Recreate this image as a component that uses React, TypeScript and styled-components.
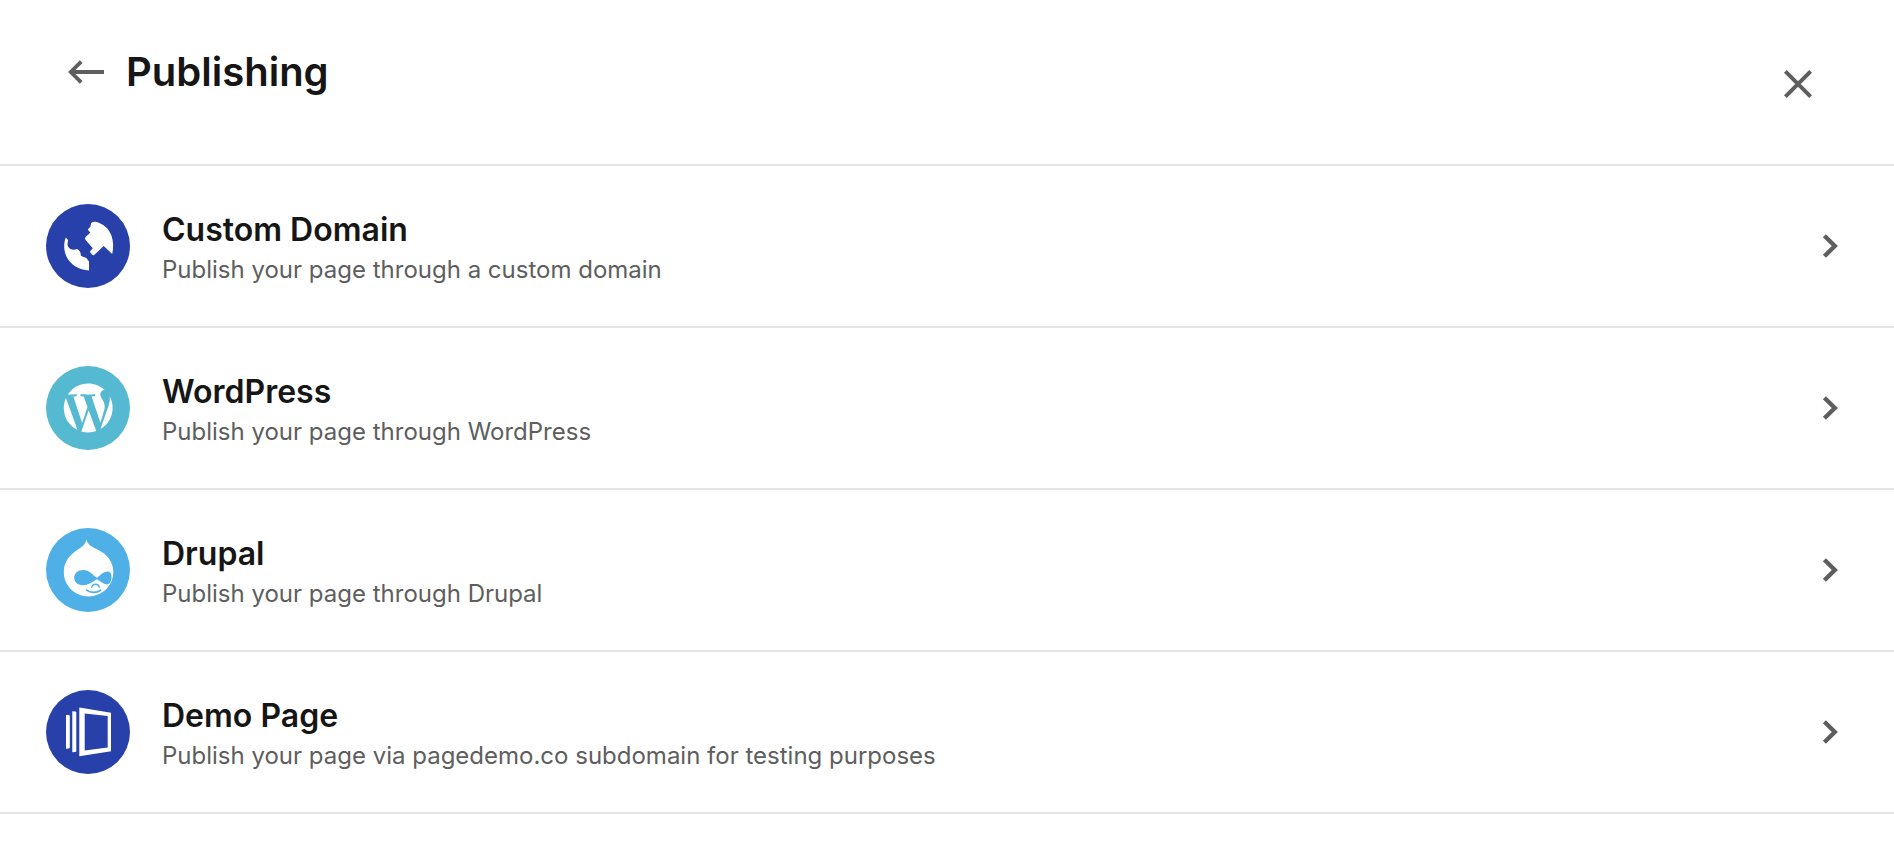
import React from "react";
import styled, { createGlobalStyle } from "styled-components";

const GlobalStyle = createGlobalStyle`
  *, *::before, *::after { box-sizing: border-box; }
  body {
    margin: 0;
    background: #fff;
    color: #161616;
    font-family: Inter, "Liberation Sans", sans-serif;
  }
`;

const Header = styled.header`
  display: flex;
  align-items: flex-start;
  justify-content: space-between;
  padding: 48px 80px 64px 68px;
  border-bottom: 2px solid #e4e4e4;
`;

const TitleGroup = styled.div`
  display: flex;
  align-items: center;
  gap: 22px;
`;

const Title = styled.h1`
  margin: 0;
  font-size: 40px;
  font-weight: 600;
  line-height: 48px;
`;

const IconButton = styled.button<{ $drop?: number }>`
  display: flex;
  margin: ${({ $drop = 0 }) => $drop}px 0 0;
  padding: 0;
  border: 0;
  background: none;
  color: #5e5e5e;
  cursor: pointer;
`;

const List = styled.ul`
  margin: 0;
  padding: 0;
  list-style: none;
`;

const Item = styled.li`
  border-bottom: 2px solid #e4e4e4;
`;

const Option = styled.a`
  display: flex;
  align-items: center;
  gap: 32px;
  padding: 38px 52px 38px 46px;
  color: inherit;
  text-decoration: none;
`;

const Badge = styled.span<{ $color: string }>`
  display: block;
  flex: none;
  width: 84px;
  height: 84px;
  border-radius: 50%;
  background: ${({ $color }) => $color};

  svg {
    display: block;
  }
`;

const Copy = styled.span`
  display: flex;
  flex: 1;
  flex-direction: column;
  gap: 4px;
  padding-top: 4px;
`;

const Name = styled.span`
  font-size: 32px;
  font-weight: 600;
  line-height: 40px;
`;

const Description = styled.span`
  color: #5e5e5e;
  font-size: 24px;
  line-height: 32px;
`;

const Chevron = styled.svg`
  flex: none;
  color: #5e5e5e;
`;

const Glyph = ({ children }: { children: React.ReactNode }) => (
  <svg width="84" height="84" viewBox="0 0 84 84" fill="#fff" aria-hidden="true">
    {children}
  </svg>
);

const GlobeGlyph = () => (
  <Glyph>
    <path d="M45.2 19 Q47 17.6 49.5 17.8 C57 19.5 63 24.5 65.6 32 C67.5 38 67.6 44 66.2 50 L57.7 42 L48.2 51 Q47.3 51.7 46.4 50.8 L44.3 48.6 Q43.7 47.8 44.4 47 L46.8 44.2 L39.6 36 Q38.4 34.4 39.6 33 L44.4 28.6 L42.4 26.6 Q41.4 25.4 42.6 24.4 L44.4 22.8 Z" />
    <path d="M19.8 33.6 L22.2 36.2 Q21 39.5 22 42.5 C24 46 28 46.4 31 45 C33.5 46 35 48.5 34.8 51.5 C36.8 53.3 39 52.9 40.2 54 C41.5 55.5 42.6 57 43 57.5 V66.4 C33 66.2 24 60.6 20.2 52 C17.6 46 17.6 39.5 19.8 33.6 Z" />
  </Glyph>
);

const WordPressGlyph = () => (
  <Glyph>
    <path
      transform="translate(17.8 17.6) scale(.1095) translate(-33 -33)"
      d="M33 256c0-32.3 6.9-63 19.3-90.7l106.4 291.4C84.3 420.5 33 344.2 33 256zm223 223c-21.9 0-43-3.2-63-9.1l66.9-194.4 68.5 187.8c.5 1.1 1 2.1 1.6 3.1-23.1 8.1-48 12.6-74 12.6zm30.7-327.5c13.4-.7 25.5-2.1 25.5-2.1 12-1.4 10.6-19.1-1.4-18.4 0 0-36.1 2.8-59.4 2.8-21.9 0-58.7-2.8-58.7-2.8-12-.7-13.4 17.7-1.4 18.4 0 0 11.4 1.4 23.4 2.1l34.7 95.2L200.6 393l-81.2-241.5c13.4-.7 25.5-2.1 25.5-2.1 12-1.4 10.6-19.1-1.4-18.4 0 0-36.1 2.8-59.4 2.8-4.2 0-9.1-.1-14.4-.3C109.6 73 178.1 33 256 33c58 0 110.9 22.2 150.6 58.5-1-.1-1.9-.2-2.9-.2-21.9 0-37.4 19.1-37.4 39.6 0 18.4 10.6 33.9 21.9 52.3 8.5 14.8 18.4 33.9 18.4 61.5 0 19.1-7.3 41.2-17 72.1l-22.2 74.3-80.7-239.6zm81.4 297.2l68.1-196.9c12.7-31.8 17-57.2 17-79.9 0-8.2-.5-15.8-1.5-22.9 17.4 31.8 27.3 68.2 27.3 107 0 82.3-44.6 154.1-110.9 192.7z"
    />
  </Glyph>
);

const DrupalGlyph = () => (
  <Glyph>
    <path d="M40.2 11.4 C41.5 16 44.5 18 51 21.2 C61 26 67.3 33.5 67.3 44 C67.3 58 56 68.4 42.5 68.4 C29 68.4 17.8 58 17.8 44 C17.8 33.5 24 27 31.5 21.8 C37 18 39.8 16 40.2 11.4 Z" />
    <path
      fill="#4fb0e8"
      d="M51 49.8 C54.5 46.8 58 43.2 62 43.4 C64.8 43.6 65.6 46.4 65.5 49.5 C65.4 53.2 63.8 56.6 60.8 56.4 C57.3 56.2 54.5 53.2 51 51.2 C46.5 53.8 42.5 57.2 36.6 57.2 C31.6 57.2 28.2 54 28.2 49.8 C28.2 45.2 32 42 37.4 42 C43.2 42 46.8 47 51 49.8 Z"
    />
    <g fill="none" stroke="#4fb0e8" strokeLinecap="round">
      <path strokeWidth="1.6" d="M45.8 59 C47.4 55.6 51.8 55.2 53.2 59" />
      <path strokeWidth="1.7" d="M40.6 62.2 C44.5 65.2 50.5 65 54.6 62.2" />
    </g>
  </Glyph>
);

const PagesGlyph = () => (
  <Glyph>
    <path d="M20 25 H22.8 Q23.8 25 23.8 26 V57.4 Q23.8 58.4 22.8 58.5 L20 58.8 Z" />
    <path d="M26.3 21.2 L29.4 21.6 Q30.3 21.8 30.3 22.6 V61 Q30.3 62 29.4 62 L26.3 62.2 Z" />
    <path
      fillRule="evenodd"
      d="M33.3 17.6 L65 22.7 V61.2 L33.3 66.3 Z M38.7 23.6 V60.4 L61.7 57.6 V26 Z"
    />
  </Glyph>
);

const options = [
  {
    name: "Custom Domain",
    description: "Publish your page through a custom domain",
    color: "#2840a9",
    glyph: <GlobeGlyph />,
  },
  {
    name: "WordPress",
    description: "Publish your page through WordPress",
    color: "#54b9d1",
    glyph: <WordPressGlyph />,
  },
  {
    name: "Drupal",
    description: "Publish your page through Drupal",
    color: "#4fb0e8",
    glyph: <DrupalGlyph />,
  },
  {
    name: "Demo Page",
    description: "Publish your page via pagedemo.co subdomain for testing purposes",
    color: "#2840a9",
    glyph: <PagesGlyph />,
  },
];

export default function App() {
  return (
    <>
      <GlobalStyle />
      <Header>
        <TitleGroup>
          <IconButton type="button" aria-label="Back">
            <svg width="36" height="24" viewBox="0 0 36 24" fill="none" stroke="currentColor" strokeWidth="4">
              <path d="M36 12H3" />
              <path d="M13.2 1.6 L2.8 12 L13.2 22.4" strokeWidth="3.8" />
            </svg>
          </IconButton>
          <Title>Publishing</Title>
        </TitleGroup>
        <IconButton type="button" aria-label="Close" $drop={20}>
          <svg width="32" height="32" viewBox="0 0 32 32" fill="none" stroke="currentColor" strokeWidth="4">
            <path d="M3.4 3.4 L28.6 28.6 M28.6 3.4 L3.4 28.6" />
          </svg>
        </IconButton>
      </Header>
      <main>
        <List>
          {options.map((option) => (
            <Item key={option.name}>
              <Option href="#">
                <Badge $color={option.color}>{option.glyph}</Badge>
                <Copy>
                  <Name>{option.name}</Name>
                  <Description>{option.description}</Description>
                </Copy>
                <Chevron width="20" height="24" viewBox="0 0 20 24" fill="none" stroke="currentColor" strokeWidth="4.4" aria-hidden="true">
                  <path d="M2.4 1.8 L12.8 12 L2.4 22.2" />
                </Chevron>
              </Option>
            </Item>
          ))}
        </List>
      </main>
    </>
  );
}
